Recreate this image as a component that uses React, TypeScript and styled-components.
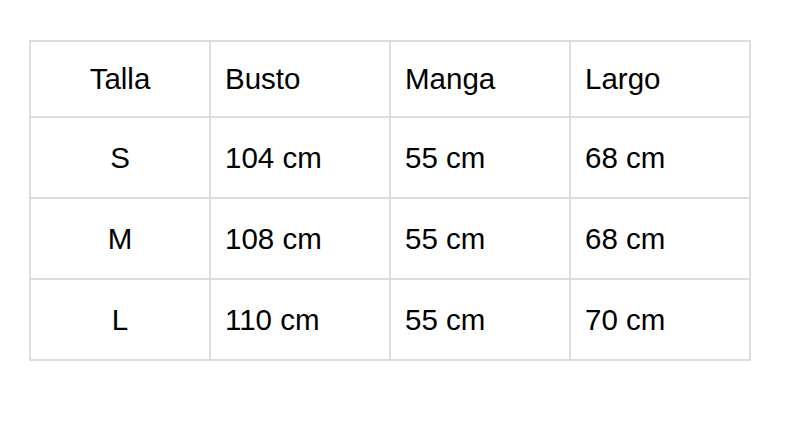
import styled, { createGlobalStyle } from "styled-components";

const GlobalStyle = createGlobalStyle`
  body {
    margin: 0;
    background: #ffffff;
    font-family: "Liberation Sans", Arial, sans-serif;
  }
`;

const Page = styled.div`
  padding: 40px 0 0 29px;
`;

const Grid = styled.div`
  display: grid;
  grid-template-columns: repeat(4, 180px);
  grid-template-rows: 76px repeat(3, 81px);
  width: max-content;
  border-left: 2px solid #dddddd;
  border-top: 2px solid #dddddd;
`;

const Cell = styled.div<{ $center?: boolean }>`
  box-sizing: border-box;
  display: flex;
  align-items: center;
  justify-content: ${(p) => (p.$center ? "center" : "flex-start")};
  padding: 0 ${(p) => (p.$center ? "0" : "14px")};
  border-right: 2px solid #dddddd;
  border-bottom: 2px solid #dddddd;
  font-size: 29.5px;
  color: #000000;
`;

const header = ["Talla", "Busto", "Manga", "Largo"];
const rows = [
  ["S", "104 cm", "55 cm", "68 cm"],
  ["M", "108 cm", "55 cm", "68 cm"],
  ["L", "110 cm", "55 cm", "70 cm"],
];

export default function App() {
  return (
    <>
      <GlobalStyle />
      <Page>
        <Grid>
          {header.map((h, i) => (
            <Cell key={h} $center={i === 0}>
              {h}
            </Cell>
          ))}
          {rows.map((r) =>
            r.map((v, i) => (
              <Cell key={r[0] + i} $center={i === 0}>
                {v}
              </Cell>
            ))
          )}
        </Grid>
      </Page>
    </>
  );
}
